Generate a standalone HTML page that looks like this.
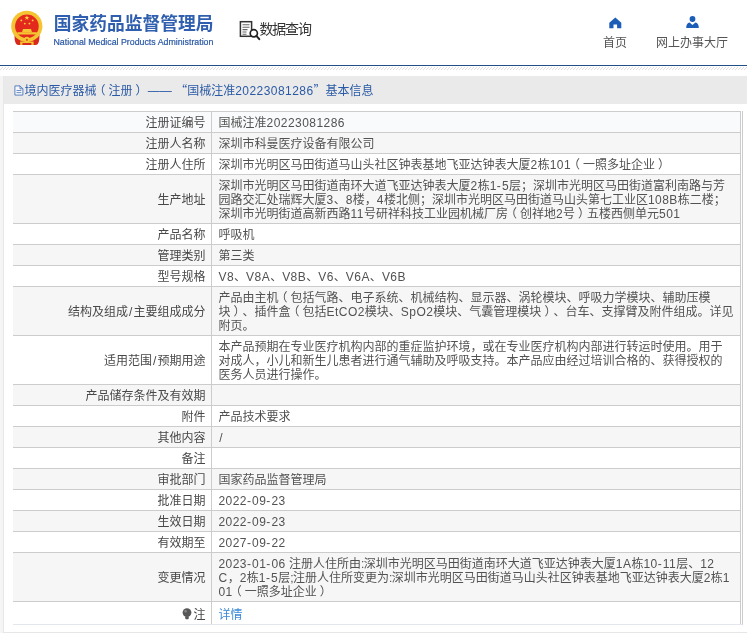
<!DOCTYPE html>
<html lang="zh-CN"><head><meta charset="utf-8"><title>国家药品监督管理局 数据查询</title>
<style>
*{margin:0;padding:0;box-sizing:border-box}
html,body{width:747px;height:633px;overflow:hidden}
body{text-spacing-trim:space-all;background:#f5f5f5;font-family:"Liberation Sans","Noto Sans CJK SC",sans-serif;font-size:12px;color:#333;position:relative}
.q{font-family:"Noto Sans CJK SC",sans-serif}
.l{letter-spacing:0.45px}
.top{will-change:transform;position:absolute;left:0;top:0;width:747px;height:76px;background:#fff}
.bline{position:absolute;left:0;top:65px;width:747px;height:1px;background:#1f4f85}
.hatch{position:absolute;left:0;top:67px}
.emblem{position:absolute;left:10px;top:10px}
.t1{position:absolute;left:53.8px;top:11px;font-size:17.75px;line-height:26px;font-weight:bold;color:#2f5fae;white-space:nowrap;letter-spacing:0}
.t2{position:absolute;left:53.5px;top:36px;font-size:8.8px;line-height:12px;color:#2a58a6;-webkit-text-stroke:0.2px #2a58a6;white-space:nowrap}
.sj{position:absolute;left:239px;top:20px}
.sjt{position:absolute;left:259.5px;top:19.7px;font-size:14px;line-height:19px;color:#333;white-space:nowrap;letter-spacing:-1.2px}
.nav{position:absolute;top:35.5px;font-size:12px;line-height:14px;color:#555;white-space:nowrap}
.ico{position:absolute}
.panel{will-change:transform;position:absolute;left:3px;top:76px;width:760px;height:557px;background:#fff;border-left:1px solid #e8e8e8;border-bottom:1px solid #e6e6e6}
.ph{position:absolute;left:0;top:0;width:100%;height:28px;background:#eaeaea;color:#2b5aa5;line-height:28px;white-space:nowrap}
.doc{position:absolute;left:10px;top:9px}
.pt{position:absolute;left:20.4px;top:0}
.tw{position:absolute;left:9px;top:35px;width:730px;border-right:1px solid #ccc;border-bottom:1px solid #e4e7ee;padding-right:1px}
table{border-collapse:separate;border-spacing:0;width:728px;table-layout:fixed}
td{border-top:1px solid #ccc;border-right:1px solid #ccc;padding:4px 6px 2px;line-height:14px;vertical-align:middle;white-space:nowrap;overflow:hidden}
td.k{width:199px;text-align:right;color:#484848;padding-right:5.5px}
td.v{width:529px;color:#525252;padding-left:6.5px}
tr.r1 td{background:#f9fafc}
tr.g td{background:#f6f6f6}
tr.w td{background:#fff}
tr.last td{height:23px;padding-top:6px}
a{color:#3b8ad9}
.bulb{vertical-align:-1px;margin-right:1px}
.h{letter-spacing:1.1px}
.c{letter-spacing:-0.6px}
.s{padding:0 0.8px}
.pl{position:relative;left:-3px}
.pr{position:relative;left:3px}

</style></head><body>
<div class="top">
<svg class="emblem" width="34" height="36" viewBox="0 0 34 36">
<path d="M4.6 24 Q4.2 31.5 6.2 34 Q7 34.9 8.5 34.9 L25.5 34.9 Q27 34.9 27.8 34 Q29.8 31.5 29.4 24 Z" fill="#d9281c"/>
<path d="M10.2 31.6 H23.6 V34.9 H21.4 V32.9 H12.4 V34.9 H10.2 Z" fill="#f3c030"/>
<circle cx="16.8" cy="16.3" r="15.6" fill="#f5c432"/>
<circle cx="16.9" cy="16.3" r="11.8" fill="#e3281d"/>
<polygon points="16.9,5.2 17.5,7 19.4,7 17.9,8.1 18.4,9.9 16.9,8.8 15.4,9.9 15.9,8.1 14.4,7 16.3,7" fill="#f8d040"/>
<circle cx="11.3" cy="10.4" r="0.95" fill="#f8d040"/><circle cx="22.7" cy="10.4" r="0.95" fill="#f8d040"/><circle cx="14.8" cy="13.6" r="0.95" fill="#f8d040"/><circle cx="19.4" cy="13.6" r="0.95" fill="#f8d040"/>
<path d="M12 22.3 L13 19 L21 19 L22 22.3 Z" fill="#f5c432"/>
<rect x="7.4" y="22.2" width="19.4" height="2.3" fill="#f5c432"/>
<circle cx="16.9" cy="29.6" r="2.9" fill="#f5c432"/>
<circle cx="16.9" cy="29.8" r="1.1" fill="#e3501d"/>
</svg>
<div class="t1">国家药品监督管理局</div>
<div class="t2">National Medical Products Administration</div>
<svg class="sj" width="22" height="21" viewBox="0 0 22 21">
<rect x="1.4" y="1.7" width="11.2" height="14.6" fill="#fff" stroke="#333" stroke-width="1.5"/>
<path d="M3.5 4.8 H10.5 M3.5 7.2 H10.5 M3.5 9.6 H8.5 M3.5 12 H7.5 M3.5 14.3 H7.5" stroke="#666" stroke-width="1.1"/>
<circle cx="14.8" cy="13.3" r="3.6" fill="#fff" stroke="#222" stroke-width="1.7"/>
<path d="M17.4 15.8 L20.3 19.2" stroke="#222" stroke-width="2" stroke-linecap="round"/>
</svg>
<div class="sjt">数据查询</div>
<svg class="ico" style="left:609px;top:16.5px" width="13" height="12" viewBox="0 0 13 12"><path d="M6.3 0.6 L12.3 5.8 V11.2 H8.1 V7.4 H4.5 V11.2 H0.3 V5.8 Z" fill="#1c5db8"/></svg>
<div class="nav" style="left:603px">首页</div>
<svg class="ico" style="left:686px;top:16px" width="13" height="12" viewBox="0 0 13 12"><circle cx="6.5" cy="3" r="2.9" fill="#1c5db8"/><path d="M0.2 12 Q0.2 7.2 3.6 6.6 L6.5 9 L9.4 6.6 Q12.8 7.2 12.8 12 Z" fill="#1c5db8"/></svg>
<div class="nav" style="left:656px">网上办事大厅</div>
<div class="bline"></div>
<svg class="hatch" width="747" height="3"><defs><pattern id="hp" width="3" height="3" patternUnits="userSpaceOnUse"><rect x="2" y="0" width="1" height="1" fill="#dedede"/><rect x="1" y="1" width="1" height="1" fill="#dedede"/><rect x="0" y="2" width="1" height="1" fill="#dedede"/></pattern></defs><rect width="747" height="3" fill="url(#hp)"/></svg>
</div>

<div class="panel">
<div class="ph"><svg class="doc" width="10" height="11" viewBox="0 0 10 11"><path d="M0.9 0.9 H6 L8.9 3.8 V10.1 H0.9 Z" fill="#f4f6fa" stroke="#4d75b8" stroke-width="0.9"/><path d="M6 0.9 V3.8 H8.9" fill="none" stroke="#4d75b8" stroke-width="0.9"/><path d="M2.5 5.5 H7.3 M2.5 7.6 H7.3" stroke="#5f83c0" stroke-width="0.9"/></svg><span class="pt">境内医疗器械<span class="pl">（</span>注册<span class="pr">）</span> —— <span class="q">“</span>国械注准<span class="l">20223081286</span><span class="q">”</span>基本信息</span></div>
<div class="tw"><table cellspacing="0" cellpadding="0">
<tr class="r1"><td class="k">注册证编号</td><td class="v">国械注准<span class="l">20223081286</span></td></tr>
<tr class="g"><td class="k">注册人名称</td><td class="v">深圳市科曼医疗设备有限公司</td></tr>
<tr class="w"><td class="k">注册人住所</td><td class="v">深圳市光明区马田街道马山头社区钟表基地飞亚达钟表大厦<span class="l">2</span>栋<span class="l">101</span><span class="pl">（</span>一照多址企业<span class="pr">）</span></td></tr>
<tr class="g"><td class="k">生产地址</td><td class="v">深圳市光明区马田街道南环大道飞亚达钟表大厦<span class="l">2</span>栋<span class="l">1<span class="h">-</span>5</span>层；深圳市光明区马田街道富利南路与芳<br>园路交汇处瑞辉大厦<span class="l">3</span>、<span class="l">8</span>楼，<span class="l">4</span>楼北侧；深圳市光明区马田街道马山头第七工业区<span class="l">108B</span>栋二楼；<br>深圳市光明街道高新西路<span class="l">11</span>号研祥科技工业园机械厂房<span class="pl">（</span>创祥地<span class="l">2</span>号<span class="pr">）</span>五楼西侧单元<span class="l">501</span></td></tr>
<tr class="w"><td class="k">产品名称</td><td class="v">呼吸机</td></tr>
<tr class="g"><td class="k">管理类别</td><td class="v">第三类</td></tr>
<tr class="w"><td class="k">型号规格</td><td class="v"><span class="l">V8</span>、<span class="l">V8A</span>、<span class="l">V8B</span>、<span class="l">V6</span>、<span class="l">V6A</span>、<span class="l">V6B</span></td></tr>
<tr class="g"><td class="k">结构及组成<span class="l"><span class="s">/</span></span>主要组成成分</td><td class="v">产品由主机<span class="pl">（</span>包括气路、电子系统、机械结构、显示器、涡轮模块、呼吸力学模块、辅助压模<br>块<span class="pr">）</span>、插件盒<span class="pl">（</span>包括<span class="l">EtCO2</span>模块、<span class="l">SpO2</span>模块、气囊管理模块<span class="pr">）</span>、台车、支撑臂及附件组成。详见<br>附页。</td></tr>
<tr class="w"><td class="k">适用范围<span class="l"><span class="s">/</span></span>预期用途</td><td class="v">本产品预期在专业医疗机构内部的重症监护环境，或在专业医疗机构内部进行转运时使用。用于<br>对成人，小儿和新生儿患者进行通气辅助及呼吸支持。本产品应由经过培训合格的、获得授权的<br>医务人员进行操作。</td></tr>
<tr class="g"><td class="k">产品储存条件及有效期</td><td class="v">&nbsp;</td></tr>
<tr class="w"><td class="k">附件</td><td class="v">产品技术要求</td></tr>
<tr class="g"><td class="k">其他内容</td><td class="v"><span class="l"><span class="s">/</span></span></td></tr>
<tr class="w"><td class="k">备注</td><td class="v">&nbsp;</td></tr>
<tr class="g"><td class="k">审批部门</td><td class="v">国家药品监督管理局</td></tr>
<tr class="w"><td class="k">批准日期</td><td class="v"><span class="l">2022<span class="h">-</span>09<span class="h">-</span>23</span></td></tr>
<tr class="g"><td class="k">生效日期</td><td class="v"><span class="l">2022<span class="h">-</span>09<span class="h">-</span>23</span></td></tr>
<tr class="w"><td class="k">有效期至</td><td class="v"><span class="l">2027<span class="h">-</span>09<span class="h">-</span>22</span></td></tr>
<tr class="g"><td class="k">变更情况</td><td class="v"><span class="l">2023<span class="h">-</span>01<span class="h">-</span>06</span> 注册人住所由<span class="l"><span class="c">:</span></span>深圳市光明区马田街道南环大道飞亚达钟表大厦<span class="l">1A</span>栋<span class="l">10<span class="h">-</span>11</span>层、<span class="l">12</span><br><span class="l">C</span>，<span class="l">2</span>栋<span class="l">1<span class="h">-</span>5</span>层<span class="l"><span class="c">;</span></span>注册人住所变更为<span class="l"><span class="c">:</span></span>深圳市光明区马田街道马山头社区钟表基地飞亚达钟表大厦<span class="l">2</span>栋<span class="l">1</span><br><span class="l">01</span><span class="pl">（</span>一照多址企业<span class="pr">）</span></td></tr>
<tr class="w last"><td class="k"><svg class="bulb" width="10" height="12" viewBox="0 0 10 12"><circle cx="5" cy="4.6" r="4.4" fill="#585858"/><rect x="3.3" y="8.4" width="3.4" height="2.8" rx="0.8" fill="#585858"/><circle cx="3.6" cy="3.2" r="1.2" fill="#8a8a8a"/></svg>注</td><td class="v"><a>详情</a></td></tr>
</table></div>
</div>
</body></html>
